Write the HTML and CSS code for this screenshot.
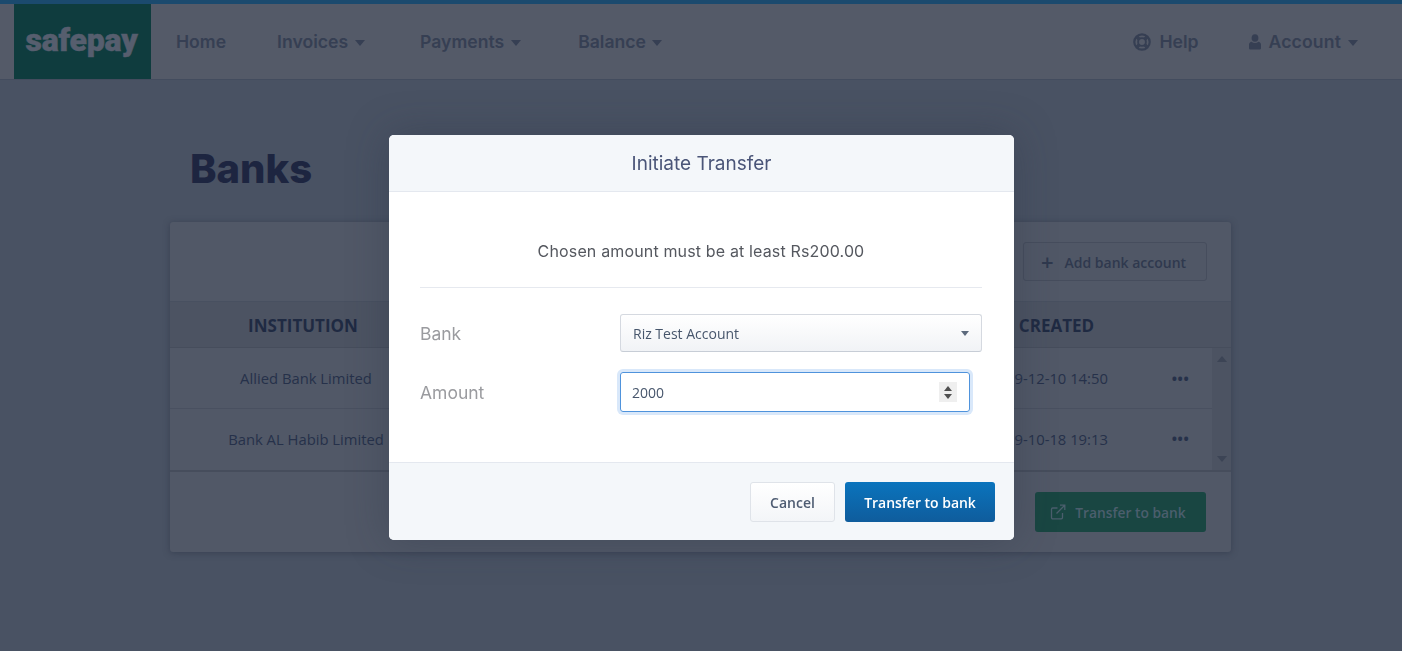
FILE: index.html
```html
<!DOCTYPE html>
<html lang="en">
<head>
<meta charset="utf-8">
<title>Banks - safepay</title>
<link rel="stylesheet" href="styles.css">
</head>
<body>
<header class="nav">
  <a class="logo">safepay</a>
  <nav class="nav-main">
    <a class="nav-item home">Home</a>
    <a class="nav-item invoices">Invoices<span class="caret"></span></a>
    <a class="nav-item payments">Payments<span class="caret"></span></a>
    <a class="nav-item balance">Balance<span class="caret"></span></a>
  </nav>
  <nav class="nav-side">
    <a class="nav-item help">
      <svg class="ico-help" viewBox="0 0 18 18"><circle cx="9" cy="9" r="7.700" fill="none" stroke="currentColor" stroke-width="2.200"/><circle cx="9" cy="9" r="3.900" fill="none" stroke="currentColor" stroke-width="1.900"/><path d="M3.500 3.500L6.500 6.500M14.500 3.500L11.500 6.500M3.500 14.500L6.500 11.500M14.500 14.500L11.500 11.500" stroke="currentColor" stroke-width="3.400"/></svg>
      Help</a>
    <a class="nav-item account">
      <svg class="ico-user" viewBox="0 0 12 16"><ellipse cx="6" cy="4" rx="3.400" ry="3.800" fill="currentColor"/><path d="M0 14V10.800C0 9 1.300 8 2.600 7.800C3.500 8.600 4.600 9 6 9C7.400 9 8.500 8.600 9.400 7.800C10.700 8 12 9 12 10.800V14C12 15 11.300 15.600 10.400 15.600H1.600C.7 15.600 0 15 0 14Z" fill="currentColor"/></svg>
      Account<span class="caret"></span></a>
  </nav>
</header>

<main class="page">
  <h1 class="title">Banks</h1>
  <section class="card">
    <div class="card-top">
      <button class="btn-add"><span class="plus">+</span>Add bank account</button>
    </div>
    <div class="row head">
      <div class="head-inst">INSTITUTION</div>
      <div></div>
      <div class="head-created">CREATED</div>
      <div></div>
    </div>
    <div class="rows">
      <div class="row-list">
        <div class="row body">
          <div>Allied Bank Limited</div><div></div><div>2019-12-10 14:50</div><div class="dots">•••</div>
        </div>
        <div class="row body">
          <div>Bank AL Habib Limited</div><div></div><div>2019-10-18 19:13</div><div class="dots">•••</div>
        </div>
      </div>
      <div class="scroll"><span class="arrow-up"></span><span class="arrow-down"></span></div>
    </div>
    <div class="card-foot">
      <button class="btn-green">
        <svg class="ico-ext" viewBox="0 0 16 16"><path d="M12.500 9V13.500C12.500 14.300 12 14.800 11.200 14.800H2.800C2 14.800 1.500 14.300 1.500 13.500V5.300C1.500 4.500 2 4 2.800 4H7.500M6.500 9.500L14.500 1.500M10 1.200H14.800V6" fill="none" stroke="currentColor" stroke-width="1.300"/></svg>
        Transfer to bank</button>
    </div>
  </section>
</main>

<div class="backdrop">
  <div class="modal">
    <div class="modal-head">Initiate Transfer</div>
    <div class="modal-body">
      <p class="notice">Chosen amount must be at least Rs200.00</p>
      <div class="field">
        <label class="label">Bank</label>
        <div class="select">Riz Test Account<span class="select-caret"></span></div>
      </div>
      <div class="field amount">
        <label class="label">Amount</label>
        <div class="input">2000<span class="spin"><i class="up"></i><i class="down"></i></span></div>
      </div>
    </div>
    <div class="modal-foot">
      <button class="btn-cancel">Cancel</button>
      <button class="btn-primary">Transfer to bank</button>
    </div>
  </div>
</div>
</body>
</html>
```
FILE: styles.css
```css
* { box-sizing: border-box; }
html, body { height: 100%; }
body {
  margin: 0;
  height: 651px;
  overflow: hidden;
  background: #495263;
  font-family: "Open Sans", "Noto Sans", sans-serif;
  color: #262f47;
}
button { font: inherit; cursor: pointer; }

.nav {
  height: 80px;
  display: flex;
  align-items: center;
  padding-left: 14px;
  background: #545a68;
  border-top: 4px solid #1b4a6e;
  border-bottom: 1px solid #434c5e;
  font-family: Inter, sans-serif;
  font-size: 17.600px;
  font-weight: 600;
  color: #363f53;
}
.logo {
  align-self: stretch;
  width: 137px;
  background: #0f3c3e;
  color: #565e6e;
  font-family: Roboto, sans-serif;
  font-size: 32px;
  font-weight: 900;
  letter-spacing: -.2px;
  -webkit-text-stroke: .5px #565e6e;
  display: flex;
  align-items: center;
  justify-content: center;
  padding: 0 2px 3px 0;
}
.nav-main { display: flex; align-items: center; margin-left: 25px; }
.nav-side { display: flex; align-items: center; margin-left: auto; margin-right: 44px; }
.nav-item { display: flex; align-items: center; }
.invoices { margin-left: 51px; }
.payments { margin-left: 55px; }
.balance { margin-left: 57px; }
.balance .caret { margin-left: 6px; }
.account { margin-left: 50px; letter-spacing: .14px; }
.caret {
  margin-left: 7px;
  margin-top: 3px;
  border-left: 5px solid transparent;
  border-right: 5px solid transparent;
  border-top: 6px solid currentColor;
}
.ico-help { width: 18px; height: 18px; margin-right: 8px; }
.ico-user { width: 12px; height: 16px; margin-right: 8px; }

.page { padding: 0 171px 0 170px; }
.title {
  margin: 0;
  padding: 65px 0 0 20px;
  height: 142px;
  font-family: Inter, sans-serif;
  font-size: 40px;
  line-height: 48px;
  font-weight: 800;
  color: #1d2540;
}
.card {
  height: 330px;
  background: #515867;
  border-radius: 3px;
  box-shadow: 0 1px 6px rgba(40, 48, 66, .5);
}
.card-top {
  height: 80px;
  padding: 20px 24px 0 0;
  display: flex;
  justify-content: flex-end;
  align-items: flex-start;
  border-bottom: 1px solid #485060;
}
.btn-add {
  width: 184px;
  height: 39px;
  background: #505766;
  border: 1px solid #464d5d;
  border-radius: 3px;
  color: #2f394e;
  font-size: 14px;
  font-weight: 600;
  display: flex;
  align-items: center;
  justify-content: center;
  padding: 1px 3px 0 0;
}
.plus { font-size: 22px; font-weight: 600; line-height: 20px; margin-right: 11px; margin-top: -3px; }

.row {
  display: grid;
  grid-template-columns: 272px 1fr 188px 69.500px;
  align-items: center;
  text-align: center;
}
.head {
  height: 46px;
  padding: 1px 19px 0 0;
  background: #4c5362;
  border-bottom: 1px solid #464d5c;
  font-size: 17px;
  font-weight: 700;
  color: #1f2a42;
}
.head-inst { padding-right: 6px; }
.head-created { padding-left: 16px; }
.rows { display: flex; height: 124px; border-bottom: 2px solid #464d5c; }
.row-list { flex: 1; }
.body {
  height: 61px;
  font-size: 14.800px;
  color: #26314a;
  border-bottom: 1px solid #495060;
}
.body:last-child { border-bottom: 0; padding-bottom: 2px; }
.dots { font-size: 14px; letter-spacing: .6px; font-weight: 700; color: #26314a; padding-left: 6.500px; }
.scroll {
  width: 19px;
  background: #4c5362;
  display: flex;
  flex-direction: column;
  justify-content: space-between;
  align-items: center;
  padding: 8px 0;
}
.arrow-up, .arrow-down {
  border-left: 5px solid transparent;
  border-right: 5px solid transparent;
}
.arrow-up { border-bottom: 6px solid #3c4455; }
.arrow-down { border-top: 6px solid #3c4455; }
.card-foot {
  height: 80px;
  padding: 20px 25px 0 0;
  display: flex;
  justify-content: flex-end;
  align-items: flex-start;
}
.btn-green {
  width: 171px;
  height: 40px;
  background: #194642;
  border: 0;
  border-radius: 3px;
  color: #4b5e6d;
  font-size: 13.800px;
  font-weight: 600;
  display: flex;
  align-items: center;
  justify-content: center;
  padding: 0 5px 0 0;
}
.ico-ext { width: 16px; height: 16px; margin-right: 9px; }

.backdrop {
  position: fixed;
  inset: 0;
}
.modal {
  position: absolute;
  left: 389px;
  top: 135px;
  width: 625px;
  height: 405px;
  background: #fff;
  border-radius: 5px;
  overflow: hidden;
  box-shadow: 0 0 40px rgba(40, 48, 66, .35);
  display: flex;
  flex-direction: column;
}
.modal-head {
  height: 57px;
  background: #f4f7fa;
  border-bottom: 1px solid #e4e8ef;
  text-align: center;
  font-family: Inter, sans-serif;
  font-size: 19px;
  line-height: 57px;
  color: #4a5578;
}
.modal-body { flex: 1; padding: 0 32px 0 31px; }
.notice {
  margin: 0;
  height: 96px;
  padding-top: 49px;
  border-bottom: 1px solid #e6e9ef;
  text-align: center;
  font-family: Inter, sans-serif;
  font-size: 16px;
  line-height: 20px;
  letter-spacing: .15px;
  color: #55585f;
}
.field { display: flex; align-items: center; margin-top: 26px; height: 38px; }
.field.amount { margin-top: 20px; height: 40px; }
.label { width: 200px; font-family: Inter, sans-serif; font-size: 17.500px; color: #9a9b9f; }
.select {
  width: 362px;
  height: 38px;
  padding: 0 12px;
  display: flex;
  align-items: center;
  justify-content: space-between;
  background: linear-gradient(#fff, #f1f3f6);
  border: 1px solid #d5d9e0;
  border-bottom-color: #c7cdd6;
  border-radius: 3px;
  font-size: 14px;
  color: #47566c;
}
.select-caret {
  border-left: 4.500px solid transparent;
  border-right: 4.500px solid transparent;
  border-top: 5px solid #5c6a7d;
}
.input {
  width: 350px;
  height: 40px;
  padding: 0 12px 0 11px;
  display: flex;
  align-items: center;
  justify-content: space-between;
  border: 1px solid #4f93dc;
  border-radius: 3px;
  box-shadow: 0 0 0 3px #d9e8fa;
  font-size: 14px;
  color: #47566c;
}
.spin {
  width: 18px;
  height: 20px;
  background: #efefef;
  display: flex;
  flex-direction: column;
  align-items: center;
  justify-content: center;
  gap: 3px;
}
.spin i { display: block; border-left: 4px solid transparent; border-right: 4px solid transparent; }
.spin .up { border-bottom: 5px solid #505050; }
.spin .down { border-top: 5px solid #505050; }
.modal-foot {
  height: 78px;
  background: #f4f7fa;
  border-top: 1px solid #e4e8ef;
  padding: 19px 19px 0 0;
  display: flex;
  justify-content: flex-end;
  align-items: flex-start;
  gap: 10px;
}
.btn-cancel {
  width: 85px;
  height: 40px;
  background: linear-gradient(#fff, #f3f5f8);
  border: 1px solid #dfe3e9;
  border-radius: 3px;
  font-size: 14px;
  font-weight: 600;
  color: #4e5c72;
}
.btn-primary {
  width: 150px;
  height: 40px;
  background: linear-gradient(#0a74bd, #0f5c9c);
  border: 0;
  border-radius: 3px;
  font-size: 14px;
  letter-spacing: -.02px;
  font-weight: 600;
  color: #fff;
}
```
